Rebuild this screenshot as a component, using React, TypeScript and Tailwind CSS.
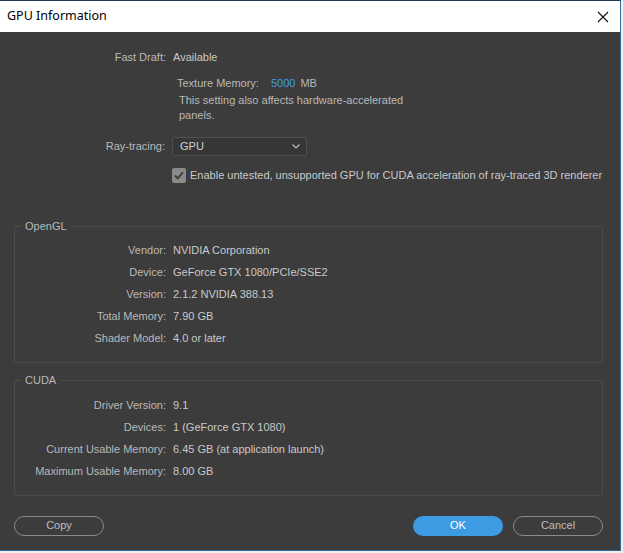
import React from 'react';

const font = { fontFamily: '"Liberation Sans", Arial, sans-serif' };

const Row = ({ label, value }: { label: string; value: React.ReactNode }) => (
  <div className="flex h-[22px] items-center">
    <div className="w-[158px] shrink-0 pr-[7px] text-right text-[#b9b9b9]">{label}</div>
    <div className="text-[#c9c9c9]">{value}</div>
  </div>
);

const Group = ({ title, children, h }: { title: string; children: React.ReactNode; h: string }) => (
  <div className={`relative ml-[14px] mr-[17px] ${h} rounded-[2px] border border-[#4b4b4b]`}>
    <span className="absolute -top-[8px] left-[6px] bg-[#3c3c3c] px-[4px] leading-[14px] text-[#b9b9b9]">{title}</span>
    {children}
  </div>
);

const App = () => {
  return (
    <div className="h-[553px] w-[623px] bg-[#f0f0f0]" style={font}>
      <div className="flex h-[551px] w-[621px] flex-col border border-l-0 border-[#2e6da0] border-t-[#1d3f5c]">
        {/* Title bar */}
        <div className="flex h-[31px] items-center justify-between bg-white pl-[7px] pr-[10px]">
          <span className="text-[12.5px] text-black" style={{ fontFamily: '"Noto Sans", "Open Sans", sans-serif' }}>
            GPU Information
          </span>
          <svg width="12" height="12" viewBox="0 0 12 12" className="mr-[1px]">
            <path d="M1 1 L11 11 M11 1 L1 11" stroke="#111" strokeWidth="1.1" />
          </svg>
        </div>

        {/* Body */}
        <div className="flex flex-1 flex-col bg-[#3c3c3c] text-[11px]">
          <div className="pt-[15px]">
            <div className="flex h-[20px] items-center">
              <div className="w-[173px] shrink-0 pr-[7px] text-right text-[#b9b9b9]">Fast Draft:</div>
              <div className="text-[#c9c9c9]">Available</div>
            </div>
            <div className="ml-[177px] mt-[9px]">
              <div className="flex h-[14px] items-center text-[#b9b9b9]">
                Texture Memory:
                <span className="ml-[12px] text-[#3f9ee6]">5000</span>
                <span className="ml-[5px]">MB</span>
              </div>
              <div className="mt-[3px] w-[240px] pl-[2px] leading-[15px] text-[#b9b9b9]">
                This setting also affects hardware-accelerated panels.
              </div>
            </div>
            <div className="mt-[13px] flex h-[20px] items-center">
              <div className="w-[172px] shrink-0 pr-[7px] text-right text-[#b9b9b9]">Ray-tracing:</div>
              <div className="flex h-[19px] w-[135px] items-center justify-between rounded-[2px] border border-[#4f4f4f] bg-[#363636] pl-[7px] pr-[6px] text-[#d0d0d0]">
                <span>GPU</span>
                <svg width="8" height="5" viewBox="0 0 8 5">
                  <path d="M0.5 0.5 L4 4 L7.5 0.5" fill="none" stroke="#bdbdbd" strokeWidth="1.1" />
                </svg>
              </div>
            </div>
            <div className="ml-[172px] mt-[11px] flex items-center">
              <div className="flex h-[15px] w-[14px] items-center justify-center rounded-[2px] bg-[#8a8a8a]">
                <svg width="10" height="9" viewBox="0 0 10 9">
                  <path d="M1 4.5 L3.8 7.3 L9 1.2" fill="none" stroke="#3a3a3a" strokeWidth="1.8" />
                </svg>
              </div>
              <span className="ml-[4px] text-[#c9c9c9]">
                Enable untested, unsupported GPU for CUDA acceleration of ray-traced 3D renderer
              </span>
            </div>
          </div>

          <div className="mt-[42px]">
            <Group title="OpenGL" h="h-[137px]">
              <div className="pt-[13px]">
                <Row label="Vendor:" value="NVIDIA Corporation" />
                <Row label="Device:" value="GeForce GTX 1080/PCIe/SSE2" />
                <Row label="Version:" value="2.1.2 NVIDIA 388.13" />
                <Row label="Total Memory:" value="7.90 GB" />
                <Row label="Shader Model:" value="4.0 or later" />
              </div>
            </Group>
          </div>

          <div className="mt-[17px]">
            <Group title="CUDA" h="h-[116px]">
              <div className="pt-[14px]">
                <Row label="Driver Version:" value="9.1" />
                <Row label="Devices:" value="1 (GeForce GTX 1080)" />
                <Row label="Current Usable Memory:" value="6.45 GB (at application launch)" />
                <Row label="Maximum Usable Memory:" value="8.00 GB" />
              </div>
            </Group>
          </div>

          <div className="mt-[20px] flex items-center pl-[14px] pr-[17px]">
            <button className="h-[20px] w-[90px] rounded-full border border-[#8a8a8a] text-[11px] text-[#bdbdbd]">Copy</button>
            <div className="flex-1" />
            <button className="h-[20px] w-[90px] rounded-full bg-[#3d9be3] text-[11px] text-white">OK</button>
            <button className="ml-[10px] h-[20px] w-[90px] rounded-full border border-[#8a8a8a] text-[11px] text-[#bdbdbd]">Cancel</button>
          </div>
        </div>
      </div>
    </div>
  );
};

export default App;
